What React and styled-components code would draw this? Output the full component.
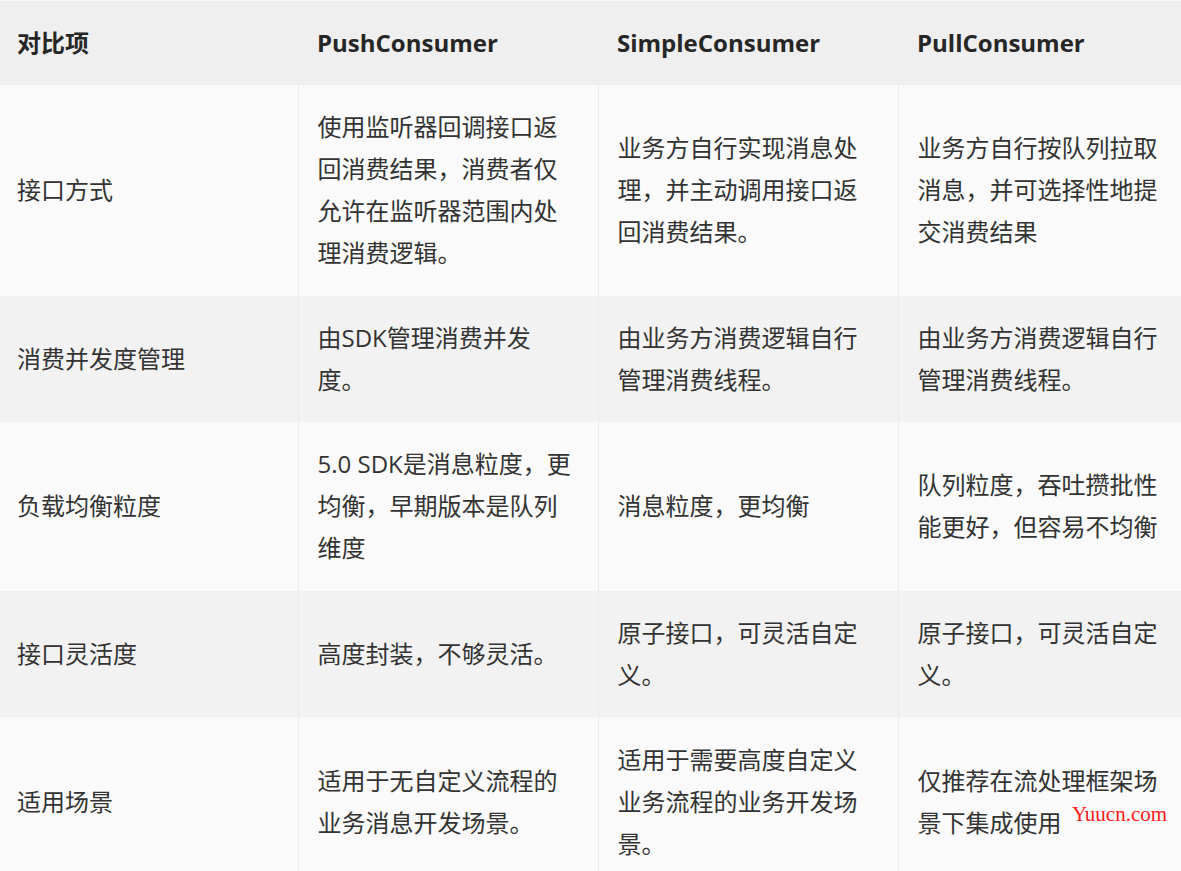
import React from "react";
import styled, { createGlobalStyle } from "styled-components";

const Global = createGlobalStyle`
  html, body { margin: 0; padding: 0; background: #fafafa; }
  body { font-family: "Open Sans", "Noto Sans CJK SC", sans-serif; }
`;

const Page = styled.div`
  position: relative;
  width: 1181px;
  height: 871px;
  overflow: hidden;
  background: #fafafa;
`;

const Table = styled.table`
  border-collapse: collapse;
  table-layout: fixed;
  width: 1198px;
  font-family: "Open Sans", "Noto Sans CJK SC", sans-serif;
  font-size: 24px;
  line-height: 42px;
  color: #333;
`;

const Col = styled.col`
  width: ${(p) => p.$w}px;
`;

const HeadRow = styled.tr`
  background: #efefef;
  border-top: 1px solid #f7f7f7;
`;

const Th = styled.th`
  text-align: left;
  font-weight: 700;
  color: #262626;
  padding: 21px 19px 21px ${(p) => (p.$first ? "17px" : "19px")};
  vertical-align: middle;
`;

const Row = styled.tr`
  background: ${(p) => (p.$alt ? "#f2f2f2" : "#fafafa")};
`;

const Td = styled.td`
  padding: 21.3px 19px 21.3px ${(p) => (p.$first ? "17px" : "19px")};
  vertical-align: middle;
  border-left: ${(p) => (p.$first ? "none" : "1px solid #ebebeb")};
  word-break: break-all;
`;

const Watermark = styled.div`
  position: absolute;
  left: 1072px;
  top: 802px;
  font-family: "Liberation Serif", serif;
  font-size: 21px;
  color: #ff1a1a;
  line-height: 24px;
`;

const widths = [298, 300, 300, 300];

const headers = ["对比项", "PushConsumer", "SimpleConsumer", "PullConsumer"];

const rows = [
  [
    "接口方式",
    "使用监听器回调接口返回消费结果，消费者仅允许在监听器范围内处理消费逻辑。",
    "业务方自行实现消息处理，并主动调用接口返回消费结果。",
    "业务方自行按队列拉取消息，并可选择性地提交消费结果",
  ],
  ["消费并发度管理", "由SDK管理消费并发度。", "由业务方消费逻辑自行管理消费线程。", "由业务方消费逻辑自行管理消费线程。"],
  ["负载均衡粒度", "5.0 SDK是消息粒度，更均衡，早期版本是队列维度", "消息粒度，更均衡", "队列粒度，吞吐攒批性能更好，但容易不均衡"],
  ["接口灵活度", "高度封装，不够灵活。", "原子接口，可灵活自定义。", "原子接口，可灵活自定义。"],
  [
    "适用场景",
    "适用于无自定义流程的业务消息开发场景。",
    "适用于需要高度自定义业务流程的业务开发场景。",
    "仅推荐在流处理框架场景下集成使用",
  ],
];

export default function App() {
  return (
    <Page>
      <Global />
      <Table>
        <colgroup>
          {widths.map((w, i) => (
            <Col key={i} $w={w} />
          ))}
        </colgroup>
        <thead>
          <HeadRow>
            {headers.map((h, i) => (
              <Th key={h} $first={i === 0}>
                {h}
              </Th>
            ))}
          </HeadRow>
        </thead>
        <tbody>
          {rows.map((r, ri) => (
            <Row key={ri} $alt={ri % 2 === 1}>
              {r.map((c, ci) => (
                <Td key={ci} $first={ci === 0}>
                  {c}
                </Td>
              ))}
            </Row>
          ))}
        </tbody>
      </Table>
      <Watermark>Yuucn.com</Watermark>
    </Page>
  );
}
